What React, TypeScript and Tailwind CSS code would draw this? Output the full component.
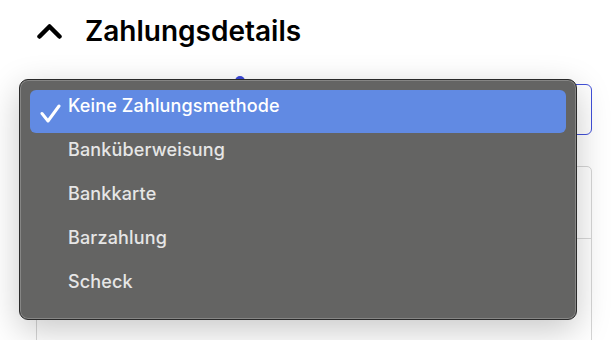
import React from "react";

const items = ["Keine Zahlungsmethode", "Banküberweisung", "Bankkarte", "Barzahlung", "Scheck"];

export default function App() {
  return (
    <div
      className="relative w-[614px] h-[340px] overflow-hidden bg-white"
      style={{ fontFamily: "Inter, 'Noto Sans', sans-serif" }}
    >
      <div className="flex flex-col">
        <div className="flex h-[62px] items-center pl-[37px]">
          <svg width="25" height="16" viewBox="0 0 25 16" className="shrink-0">
            <polyline
              points="2.5,13.5 12.5,3.5 22.5,13.5"
              fill="none"
              stroke="#000"
              strokeWidth="4.5"
              strokeLinecap="round"
              strokeLinejoin="round"
            />
          </svg>
          <span className="ml-[23px] text-[28px] leading-none font-semibold text-black tracking-[0px]">
            Zahlungsdetails
          </span>
        </div>
        <div className="ml-[36px] w-[556px] flex flex-col">
          <div className="mt-[22px] h-[51px] rounded-[6px] border border-[#4150d9]" />
          <div className="mt-[31px] h-[200px] rounded-[5px] border border-[#d6d6d6]">
            <div className="h-[72px] border-b border-[#d9d9d9]" />
          </div>
        </div>
      </div>

      <div className="absolute left-[235px] top-[76px] h-[10px] w-[10px] rounded-full bg-[#3b48d8]" />

      <div className="absolute left-[19px] top-[79px] w-[558px] h-[241px] rounded-[9px] border border-[#2a2a2a] bg-[#646463] shadow-[inset_0_0_0_1px_rgba(255,255,255,0.22),0_10px_34px_rgba(0,0,0,0.22)] px-[10px] pt-[10px]">
        {items.map((label, i) => (
          <div
            key={label}
            className={
              i === 0
                ? "relative h-[43px] mb-[1px] rounded-[6px] bg-[#618ae3] pl-[38px] pt-[5px]"
                : "relative h-[43px] mb-[1px] rounded-[6px] pl-[38px] pt-[5px]"
            }
          >
            {i === 0 && (
              <svg
                width="24"
                height="24"
                viewBox="0 0 24 24"
                className="absolute left-[10px] top-[12px]"
              >
                <polyline
                  points="2,11.5 8,19 19,4"
                  fill="none"
                  stroke="#fff"
                  strokeWidth="3"
                  strokeLinecap="round"
                  strokeLinejoin="round"
                />
              </svg>
            )}
            <span
              className={
                i === 0
                  ? "block text-[18px] leading-[21px] font-medium tracking-[0.15px] text-white"
                  : "block text-[18px] leading-[21px] font-medium tracking-[0.15px] text-[#e6e6e6]"
              }
            >
              {label}
            </span>
          </div>
        ))}
      </div>
    </div>
  );
}
